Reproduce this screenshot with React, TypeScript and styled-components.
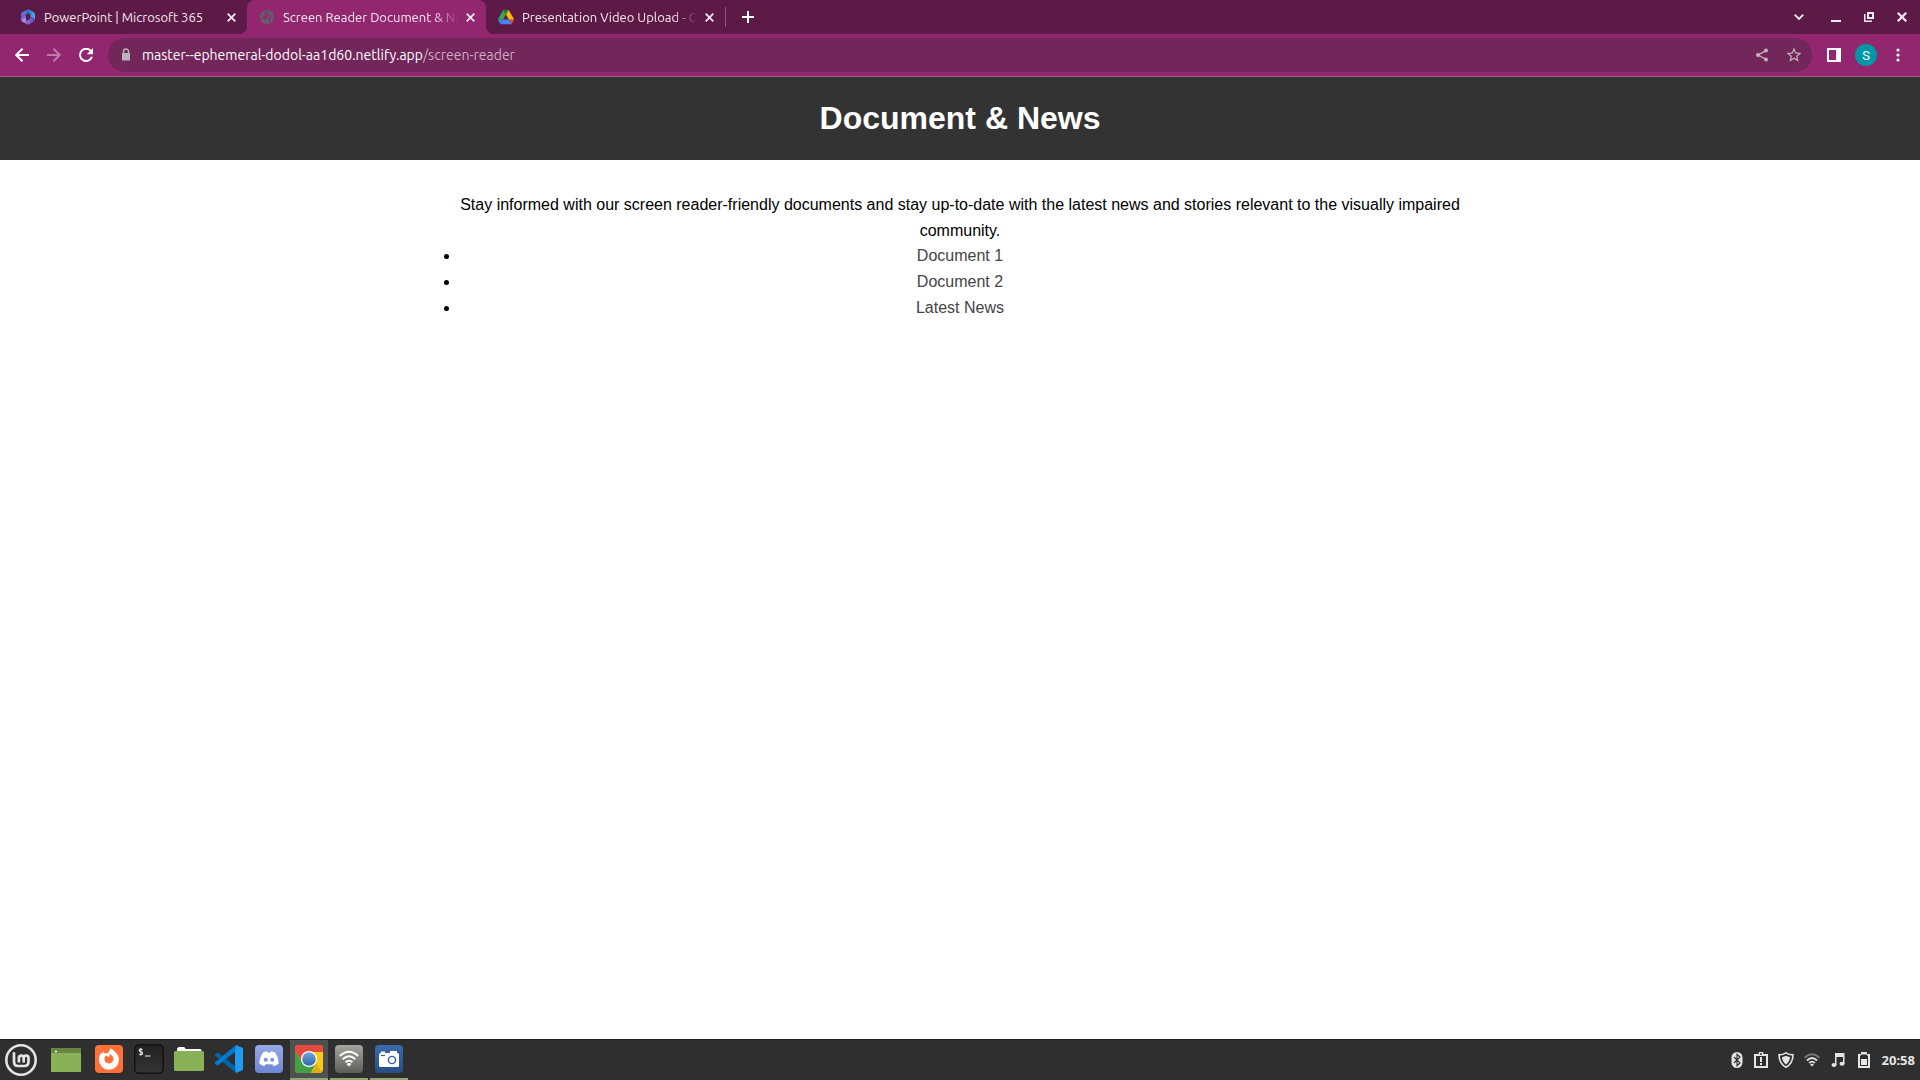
import React from "react";
import styled, { createGlobalStyle, css } from "styled-components";

const colors = {
  frame: "#5e1a46",
  toolbar: "#92276f",
  field: "#72265a",
  seam: "#ab5c93",
  page: "#333333",
  panel: "#2f2f2f",
  accent: "#8fa876",
};

const uiFont = `"Ubuntu", "Noto Sans", "Open Sans", sans-serif`;

const GlobalStyle = createGlobalStyle`
  * { box-sizing: border-box; }
  body { margin: 0; }
  button { padding: 0; border: 0; background: none; color: inherit; font: inherit; cursor: pointer; }
  svg { display: block; flex: none; }
`;

const Desktop = styled.div`
  display: flex;
  flex-direction: column;
  height: 100vh;
  background: #fff;
`;

/* ---------- browser window ---------- */

const TabStrip = styled.header`
  display: flex;
  align-items: stretch;
  height: 34px;
  flex: none;
  padding-left: 8px;
  background: ${colors.frame};
  color: #f3e8ef;
  font: 13px ${uiFont};
`;

const TabList = styled.div`
  display: flex;
`;

const activeTab = css`
  background: ${colors.toolbar};
  border-radius: 8px 8px 0 0;

  &::before,
  &::after {
    content: "";
    position: absolute;
    bottom: 0;
    width: 8px;
    height: 8px;
  }
  &::before {
    left: -8px;
    background: radial-gradient(circle at 0 0, transparent 8px, ${colors.toolbar} 8px);
  }
  &::after {
    right: -8px;
    background: radial-gradient(circle at 100% 0, transparent 8px, ${colors.toolbar} 8px);
  }
`;

const Tab = styled.div<{ $active?: boolean }>`
  position: relative;
  display: flex;
  align-items: center;
  gap: 4px;
  width: 239px;
  padding: 0 8px 0 12px;
  ${(p) => p.$active && activeTab}
`;

const TabButton = styled.button`
  display: flex;
  flex: 1;
  min-width: 0;
  align-items: center;
  gap: 8px;
  text-align: left;
`;

const TabTitle = styled.span<{ $fade?: boolean }>`
  flex: 1;
  overflow: hidden;
  white-space: nowrap;
  ${(p) => p.$fade && "mask-image: linear-gradient(to left, transparent, #000 24px);"}
`;

const IconButton = styled.button<{ $size: number; $dim?: boolean }>`
  display: grid;
  place-items: center;
  flex: none;
  width: ${(p) => p.$size}px;
  height: ${(p) => p.$size}px;
  opacity: ${(p) => (p.$dim ? 0.4 : 1)};
`;

const NewTab = styled.div`
  display: flex;
  align-items: center;
  align-self: center;
  height: 20px;
  padding-left: 8px;
  border-left: 1px solid #8d5a7a;
`;

const WindowControls = styled.div`
  display: flex;
  align-items: center;
  margin-left: auto;
  padding-right: 2px;
`;

const Toolbar = styled.div`
  display: flex;
  align-items: center;
  height: 43px;
  flex: none;
  padding: 0 6px;
  background: ${colors.toolbar};
  border-bottom: 1px solid ${colors.seam};
  color: #fff;
`;

const AddressBar = styled.form`
  display: flex;
  flex: 1;
  align-items: center;
  height: 34px;
  margin: 0 6px;
  padding: 0 2px 0 10px;
  border-radius: 17px;
  background: ${colors.field};
  color: #c3b3bd;
  font: 14px ${uiFont};
`;

const SiteHost = styled.label`
  margin-left: 8px;
  color: #fff;
`;

const PathInput = styled.input`
  flex: 1;
  min-width: 0;
  padding: 0;
  border: 0;
  outline: 0;
  background: none;
  color: #cdacc2;
  font: inherit;
`;

const Avatar = styled.span`
  display: grid;
  place-items: center;
  width: 22px;
  height: 22px;
  border-radius: 50%;
  background: #0097a7;
  color: #fff;
  font: 13px Roboto, sans-serif;
`;

/* ---------- web page ---------- */

const Page = styled.div`
  flex: 1;
  min-height: 0;
  overflow: auto;
  background: #fff;
  color: #000;
  font: 16px/1.6 "Liberation Sans", Arial, sans-serif;
  text-align: center;
`;

const Banner = styled.header`
  padding: 16px;
  background: ${colors.page};
  color: #fff;
`;

const Title = styled.h1`
  margin: 0;
  font-size: 32px;
`;

const Content = styled.main`
  max-width: 1000px;
  margin: 32px auto;
`;

const Intro = styled.p`
  margin: 0;
`;

const DocumentList = styled.ul`
  margin: 0;
  padding: 0;
`;

const DocumentLink = styled.a`
  color: #444;
  text-decoration: none;
`;

/* ---------- desktop panel ---------- */

const Panel = styled.footer`
  display: flex;
  align-items: stretch;
  height: 41px;
  flex: none;
  padding-right: 5px;
  border-top: 1px solid #202020;
  background: ${colors.panel};
  color: #e4e4e4;
`;

const Launchers = styled.nav`
  display: flex;
  gap: 2px;
`;

const MenuButton = styled.button`
  display: grid;
  place-items: center;
  width: 42px;
`;

const DesktopButton = styled(MenuButton)`
  width: 44px;
`;

const Launcher = styled.button<{ $open?: boolean; $focused?: boolean }>`
  display: grid;
  place-items: center;
  width: 38px;
  border-bottom: 2px solid ${(p) => (p.$open ? colors.accent : "transparent")};
  background: ${(p) => (p.$focused ? "#505050" : "none")};
`;

const Tray = styled.div`
  display: flex;
  align-items: center;
  gap: 2px;
  margin-left: auto;
`;

const Clock = styled.time`
  margin-left: 4px;
  font: bold 13px "Noto Sans", sans-serif;
`;

/* ---------- icons ---------- */

const CloseIcon = ({ size = 9, w = 1.8 }: { size?: number; w?: number }) => (
  <svg width={size} height={size} viewBox="0 0 9 9" stroke="currentColor" strokeWidth={w}>
    <path d="M.7.7l7.6 7.6M8.3.7L.7 8.3" />
  </svg>
);

const OfficeIcon = () => (
  <svg width="16" height="16" viewBox="0 0 16 16">
    <defs>
      <linearGradient id="offA" x1="0" y1="0" x2="0.3" y2="1">
        <stop offset="0" stopColor="#5bb4f0" />
        <stop offset=".55" stopColor="#5a5bd0" />
        <stop offset="1" stopColor="#b9a1ee" />
      </linearGradient>
      <linearGradient id="offB" x1="0" y1="0" x2="1" y2="1">
        <stop offset="0" stopColor="#2a5bb8" />
        <stop offset="1" stopColor="#43c8f5" />
      </linearGradient>
      <linearGradient id="offC" x1="0" y1="0" x2="1" y2="0">
        <stop offset="0" stopColor="#b57be0" />
        <stop offset="1" stopColor="#5646b8" />
      </linearGradient>
    </defs>
    <path d="M7.800.4L2 3.600Q1 4.200 1 5.400v5.200q0 1.200 1 1.800l2 1.100 2-1.300V5.600z" fill="url(#offA)" />
    <path d="M7.600.5q.9-.5 1.800 0L14 3.300q1 .6 1 1.700v5.300L10.500 7.800V5.300L8.200 4 6 5.400V2.700q0-1.400 1.600-2.200z" fill="url(#offB)" />
    <path d="M15 10.300q0 1.400-1 2l-4.600 2.900q-1.300.7-2.600 0L2.400 12.600q1.600.6 3.100-.2l5-3V7.600l3 .8z" fill="url(#offC)" />
  </svg>
);

const GlobeIcon = () => (
  <svg width="16" height="16" viewBox="0 0 16 16">
    <circle cx="8" cy="8" r="7" fill="#5f6368" />
    <path
      d="M8.500 2.500Q5.800 3 6.600 4.800L8.600 5 8 6.800 5.500 7.200 8.200 8.400 10.500 8.600 11 10.500 9.800 12.800M2.600 8.600L5.400 9 6.800 10.200 6.300 11.600M9.800 6.800L13.200 7.500"
      fill="none"
      stroke={colors.toolbar}
      strokeWidth="1.500"
    />
  </svg>
);

const DriveIcon = () => (
  <svg width="16" height="16" viewBox="0 0 87.3 78">
    <path d="m6.600 66.850 3.850 6.650c.8 1.400 1.950 2.500 3.300 3.300l13.750-23.800h-27.500c0 1.550.4 3.100 1.200 4.500z" fill="#4285f4" />
    <path d="m43.650 25-13.750-23.800c-1.350.8-2.500 1.900-3.300 3.300l-25.400 44a9.060 9.060 0 0 0 -1.200 4.500h27.500z" fill="#34a853" />
    <path d="m73.550 76.800c1.350-.8 2.500-1.900 3.300-3.300l1.600-2.750 7.650-13.250c.8-1.400 1.200-2.950 1.200-4.500h-27.502l5.852 11.500z" fill="#ea4335" />
    <path d="m43.650 25 13.750-23.800c-1.350-.8-2.900-1.200-4.500-1.200h-18.500c-1.600 0-3.150.45-4.500 1.200z" fill="#188038" />
    <path d="m59.800 53h-32.300l-13.750 23.800c1.350.8 2.900 1.200 4.500 1.200h50.800c1.600 0 3.150-.45 4.500-1.200z" fill="#4285f4" />
    <path d="m73.400 26.500-12.700-22c-.8-1.400-1.950-2.500-3.300-3.300l-13.750 23.800 16.150 28h27.450c0-1.550-.4-3.100-1.200-4.500z" fill="#fbbc04" />
  </svg>
);

const PlusIcon = () => (
  <svg width="12" height="12" viewBox="0 0 12 12" stroke="#fff" strokeWidth="2">
    <path d="M6 0v12M0 6h12" />
  </svg>
);
const ChevronIcon = () => (
  <svg width="10" height="6" viewBox="0 0 10 6" fill="none" stroke="currentColor" strokeWidth="1.800">
    <path d="M.7.7L5 5 9.300.7" />
  </svg>
);
const MinimizeIcon = () => (
  <svg width="10" height="10" viewBox="0 0 10 10" fill="currentColor">
    <path d="M0 8h10v2H0z" />
  </svg>
);
const RestoreIcon = () => (
  <svg width="10" height="10" viewBox="0 0 10 10" fill="currentColor">
    <path fillRule="evenodd" d="M3 0h7v7H3zM5 2v3h3V2z" />
    <path d="M0 2h1.500v6.500H8V10H0z" />
  </svg>
);

const ArrowIcon = ({ forward }: { forward?: boolean }) => (
  <svg width="14" height="14" viewBox="0 0 14 14" fill="none" stroke="currentColor" strokeWidth="2">
    <path d={forward ? "M0 7h12.500M6.500.7L12.800 7l-6.300 6.300" : "M14 7H1.500M7.500.7L1.200 7l6.300 6.300"} />
  </svg>
);
const ReloadIcon = () => (
  <svg width="14" height="14" viewBox="0 0 14 14">
    <path d="M12 3.200A6.100 6.100 0 1 0 12.900 8.800" fill="none" stroke="currentColor" strokeWidth="2" />
    <path d="M14 0v6.200H7.800z" fill="currentColor" />
  </svg>
);
const LockIcon = () => (
  <svg width="16" height="16" viewBox="0 0 16 16">
    <path d="M5.500 7V4.500a2.500 2.500 0 0 1 5 0V7" fill="none" stroke="#b9b5b9" strokeWidth="1.400" />
    <path d="M4 6h8v7.500H4z" fill="#b9b5b9" />
  </svg>
);
const ShareIcon = () => (
  <svg width="14" height="14" viewBox="0 0 14 14" fill="currentColor">
    <path d="M11 2.600L3 7l8 4.400" fill="none" stroke="currentColor" strokeWidth="1.200" />
    <circle cx="11" cy="2.600" r="2" />
    <circle cx="3" cy="7" r="2.100" />
    <circle cx="11" cy="11.400" r="2" />
  </svg>
);
const StarIcon = () => (
  <svg width="18" height="18" viewBox="0 0 24 24" fill="currentColor">
    <path d="M22 9.240l-7.190-.62L12 2 9.190 8.630 2 9.240l5.460 4.730L5.820 21 12 17.270 18.180 21l-1.630-7.030L22 9.240zM12 15.400l-3.760 2.270 1-4.280-3.320-2.880 4.380-.38L12 6.100l1.710 4.040 4.380.38-3.320 2.880 1 4.280L12 15.400z" />
  </svg>
);
const SidePanelIcon = () => (
  <svg width="14" height="14" viewBox="0 0 14 14" fill="currentColor">
    <path fillRule="evenodd" d="M0 0h14v14H0zM2 2v10h7V2z" />
  </svg>
);
const DotsIcon = () => (
  <svg width="4" height="14" viewBox="0 0 4 14" fill="currentColor">
    <circle cx="2" cy="2" r="1.600" />
    <circle cx="2" cy="7" r="1.600" />
    <circle cx="2" cy="12" r="1.600" />
  </svg>
);

const MintIcon = () => (
  <svg width="32" height="32" viewBox="0 0 32 32" fill="none" stroke="#e4e4e4">
    <circle cx="16" cy="16" r="14.700" strokeWidth="2.600" />
    <path d="M9 8.200v9.600q0 4.200 4.200 4.200h6q4.300 0 4.300-4.200V14a2.400 2.400 0 0 0-4.800 0v4.600M18.700 14a2.400 2.400 0 0 0-4.800 0v4.600" strokeWidth="2.700" />
  </svg>
);
const ShowDesktopIcon = () => (
  <svg width="30" height="24" viewBox="0 0 30 24">
    <path d="M0 0h30v24H0z" fill="#8bb158" />
    <path d="M0 0h30v5H0z" fill="#688542" />
    <circle cx="5" cy="3.500" r="1" fill="#fff" />
  </svg>
);
const FirefoxIcon = () => (
  <svg width="30" height="30" viewBox="0 0 30 30">
    <rect x="1" y="1.500" width="28" height="28" rx="4" fill="#1c1c1c" />
    <rect x="1" y="1" width="28" height="28" rx="4" fill="#ff7139" />
    <path
      fillRule="evenodd"
      d="M16.500 4.200Q20 6 21.500 8.500l1 .8q2.700 3 2.500 6.600A10 10 0 0 1 5 15.500Q5 11 7.500 8.500l.6 1.500 1.400-3 .9 2.200 2.600.3 1.600-1zM12.500 11.500l-1.600 1.300Q9.800 15 11 17.200q1.700 2.300 4.500 2.200 3.800-.8 4-4.400-.2-2.600-2.600-4.200l-1.600-.6.400 2.200-1.700.4z"
      fill="#fff"
    />
  </svg>
);
const TerminalIcon = () => (
  <svg width="30" height="30" viewBox="0 0 30 30">
    <defs>
      <linearGradient id="term" x1="0" y1="0" x2="0" y2="1">
        <stop offset="0" stopColor="#222" />
        <stop offset="1" stopColor="#353535" />
      </linearGradient>
    </defs>
    <rect x=".7" y=".7" width="28.600" height="28.600" rx="4.500" fill="url(#term)" stroke="#111" strokeWidth="1.400" />
    <path d="M8.500 5.600Q7.800 5 6.800 5 5.200 5 5.200 6.300T6.900 7.700 8.600 9.200 6.900 10.600 5 9.900M6.900 4v7.700M11 12h5.500" fill="none" stroke="#eee" strokeWidth="1.100" />
  </svg>
);
const FilesIcon = () => (
  <svg width="30" height="26" viewBox="0 0 30 26">
    <path d="M3 6V3.500Q3 1 5.500 1h4q1.500 0 2.200 2H26q1.500 0 1.500 1.500V6z" fill="#fff" />
    <rect y="5" width="30" height="20" rx="1.500" fill="#8bb158" />
  </svg>
);
const CodeIcon = () => (
  <svg width="30" height="30" viewBox="0 0 30 30">
    <path d="M1 10.500l2-1.700q.7-.4 1.300 0L22 23v6L1.200 11.800q-.7-.7-.2-1.300z" fill="#0065a9" />
    <path d="M1 19.500l2 1.700q.7.4 1.300 0L22 7V1L1.200 18.200q-.7.700-.2 1.300z" fill="#007acc" />
    <path d="M21 8l1-7 7 3v22l-7 3-1-7z" fill="#1f9cf0" />
  </svg>
);
const DiscordIcon = () => (
  <svg width="30" height="30" viewBox="0 0 30 30">
    <defs>
      <linearGradient id="disc" x1="0" y1="0" x2="0" y2="1">
        <stop offset="0" stopColor="#97a8e4" />
        <stop offset="1" stopColor="#6d86d6" />
      </linearGradient>
    </defs>
    <rect x="1" y="1" width="28" height="28" rx="4" fill="url(#disc)" />
    <path d="M9 8.500q2-1 3.700-1.200l.6 1.100h3.400l.6-1.100Q19 7.500 21 8.500q3.500 5 3.700 11-2.200 2-5.200 2.500l-1-1.800H11.500l-1 1.800q-3-.5-5.200-2.500.2-6 3.700-11z" fill="#fff" />
    <circle cx="11.800" cy="15.700" r="2" fill="#7d92dc" />
    <circle cx="18.200" cy="15.700" r="2" fill="#7d92dc" />
  </svg>
);
const ChromeIcon = () => (
  <svg width="30" height="30" viewBox="0 0 30 30">
    <defs>
      <clipPath id="chromeTile">
        <rect x="1" y="1" width="28" height="28" rx="4" />
      </clipPath>
      <linearGradient id="chromeBlue" x1="0" y1="0" x2="0" y2="1">
        <stop offset="0" stopColor="#73a9dc" />
        <stop offset="1" stopColor="#2b65a8" />
      </linearGradient>
    </defs>
    <g clipPath="url(#chromeTile)">
      <path d="M0 0h30v30H0z" fill="#f9cb12" />
      <path d="M0 5l8 13 13 2-4 10H0z" fill="#43a047" />
      <path d="M16 30l4-7 2-4 7 11z" fill="#dfae1a" />
      <path d="M0 0h30v8H15l-8 8L1 7z" fill="#e64a3f" />
    </g>
    <circle cx="15" cy="15" r="8" fill="#fff" />
    <circle cx="15" cy="15" r="6.800" fill="url(#chromeBlue)" />
  </svg>
);
const NetworkIcon = () => (
  <svg width="30" height="30" viewBox="0 0 30 30">
    <defs>
      <linearGradient id="net" x1="0" y1="0" x2="0" y2="1">
        <stop offset="0" stopColor="#a3a59e" />
        <stop offset="1" stopColor="#5c5e58" />
      </linearGradient>
    </defs>
    <rect x="1" y="1" width="28" height="28" rx="4" fill="url(#net)" />
    <path d="M5.800 12Q15 3.500 24.200 12M8.700 15.200q6.300-5.800 12.600 0M11.500 18.300q3.500-3.200 7 0" fill="none" stroke="#fff" strokeWidth="2" />
    <path d="M15 22.500l-2.500-2.600q2.500-1.700 5 0z" fill="#fff" />
  </svg>
);
const CameraIcon = () => (
  <svg width="30" height="30" viewBox="0 0 30 30">
    <defs>
      <linearGradient id="cam" x1="0" y1="0" x2="0" y2="1">
        <stop offset="0" stopColor="#3b6cab" />
        <stop offset="1" stopColor="#274c84" />
      </linearGradient>
    </defs>
    <rect x="1" y="1" width="28" height="28" rx="4" fill="url(#cam)" />
    <path d="M7 7.500h4V9H7zM16 7h7v2h-7z" fill="#fff" />
    <rect x="5" y="9" width="20" height="14" rx="1.500" fill="#fff" />
    <circle cx="18" cy="16" r="3.600" fill="none" stroke="#31609c" strokeWidth="1.400" />
    <path d="M7 11.500h4" stroke="#31609c" strokeWidth="1.200" />
  </svg>
);

const BluetoothIcon = () => (
  <svg width="12" height="16" viewBox="0 0 12 16">
    <rect x=".5" width="11" height="16" rx="5.500" fill="currentColor" />
    <path d="M3 5l6 6-3 2.700V2.300L9 5l-6 6" fill="none" stroke={colors.panel} strokeWidth="1.100" />
  </svg>
);
const ClipboardIcon = () => (
  <svg width="14" height="16" viewBox="0 0 14 16">
    <path fillRule="evenodd" d="M0 2h4.500a2.500 2.500 0 0 1 5 0H14v14H0zM2 4v10h10V4zM6 5h2v5H6zM6 11h2v2H6z" fill="currentColor" />
    <circle cx="7" cy="2" r="1" fill={colors.panel} />
  </svg>
);
const ShieldIcon = () => (
  <svg width="16" height="16" viewBox="0 0 16 16">
    <path d="M8 .8q3 2 7 2.100-.2 8.500-7 12.300Q1.200 11.400 1 2.900 5 2.800 8 .8z" fill="none" stroke="currentColor" strokeWidth="1.600" />
    <path d="M8 3.800q1.800 1 4.100 1.400-.5 4.500-4.100 7.200-3.600-2.700-4.100-7.200Q6.200 4.800 8 3.800z" fill="currentColor" />
  </svg>
);
const WifiIcon = () => (
  <svg width="16" height="14" viewBox="0 0 16 14" fill="none" strokeWidth="1.900">
    <path d="M.6 4.800Q8-2.200 15.400 4.800" stroke="#777" />
    <path d="M3 7.500q5-4.900 10 0M5.200 10q2.800-2.800 5.600 0" stroke="currentColor" />
    <path d="M8 13.500l-2-2q2-1.500 4 0z" fill="currentColor" />
  </svg>
);
const MusicIcon = () => (
  <svg width="14" height="14" viewBox="0 0 14 14" fill="currentColor">
    <path d="M4 0h9.500v11H12V4H5.500v8H4z" />
    <ellipse cx="3" cy="12" rx="2.500" ry="2" />
    <ellipse cx="11" cy="10.800" rx="2.500" ry="2" />
  </svg>
);
const BatteryIcon = () => (
  <svg width="12" height="16" viewBox="0 0 12 16">
    <path fillRule="evenodd" d="M3 0h6v2h3v14H0V2h3zM2 4v10h8V4L8.500 2.500h-5z" fill="currentColor" />
    <path d="M3 7h6v6H3z" fill="currentColor" />
  </svg>
);

/* ---------- data ---------- */

const tabs = [
  { title: "PowerPoint | Microsoft 365", icon: <OfficeIcon /> },
  { title: "Screen Reader Document & Ne", icon: <GlobeIcon />, active: true, fade: true },
  { title: "Presentation Video Upload - G", icon: <DriveIcon />, fade: true },
];

const documents = ["Document 1", "Document 2", "Latest News"];

const launchers = [
  { name: "Firefox", icon: <FirefoxIcon /> },
  { name: "Terminal", icon: <TerminalIcon /> },
  { name: "Files", icon: <FilesIcon /> },
  { name: "Code", icon: <CodeIcon /> },
  { name: "Discord", icon: <DiscordIcon /> },
  { name: "Chrome", icon: <ChromeIcon />, open: true, focused: true },
  { name: "Network", icon: <NetworkIcon />, open: true },
  { name: "Screenshot", icon: <CameraIcon />, open: true },
];

const tray = [
  { name: "Bluetooth", icon: <BluetoothIcon />, size: 22 },
  { name: "Reports", icon: <ClipboardIcon />, size: 22 },
  { name: "Updates", icon: <ShieldIcon />, size: 24 },
  { name: "Wi-Fi", icon: <WifiIcon />, size: 24 },
  { name: "Sound", icon: <MusicIcon />, size: 24 },
  { name: "Battery", icon: <BatteryIcon />, size: 24 },
];

export default function App() {
  return (
    <Desktop>
      <GlobalStyle />
      <TabStrip>
        <TabList role="tablist">
          {tabs.map((t) => (
            <Tab key={t.title} $active={t.active}>
              <TabButton role="tab" aria-selected={!!t.active}>
                {t.icon}
                <TabTitle $fade={t.fade}>{t.title}</TabTitle>
              </TabButton>
              <IconButton $size={16} aria-label="Close tab">
                <CloseIcon />
              </IconButton>
            </Tab>
          ))}
        </TabList>
        <NewTab>
          <IconButton $size={28} aria-label="New tab">
            <PlusIcon />
          </IconButton>
        </NewTab>
        <WindowControls>
          <IconButton $size={42} aria-label="Search tabs">
            <ChevronIcon />
          </IconButton>
          <IconButton $size={32} aria-label="Minimize">
            <MinimizeIcon />
          </IconButton>
          <IconButton $size={34} aria-label="Restore">
            <RestoreIcon />
          </IconButton>
          <IconButton $size={32} aria-label="Close window">
            <CloseIcon size={10} w={2} />
          </IconButton>
        </WindowControls>
      </TabStrip>

      <Toolbar>
        <IconButton $size={32} aria-label="Back">
          <ArrowIcon />
        </IconButton>
        <IconButton $size={32} $dim aria-label="Forward">
          <ArrowIcon forward />
        </IconButton>
        <IconButton $size={32} aria-label="Reload">
          <ReloadIcon />
        </IconButton>
        <AddressBar onSubmit={(e) => e.preventDefault()}>
          <LockIcon />
          <SiteHost htmlFor="path">master--ephemeral-dodol-aa1d60.netlify.app</SiteHost>
          <PathInput id="path" defaultValue="/screen-reader" />
          <IconButton type="button" $size={32} aria-label="Share">
            <ShareIcon />
          </IconButton>
          <IconButton type="button" $size={32} aria-label="Bookmark">
            <StarIcon />
          </IconButton>
        </AddressBar>
        <IconButton $size={32} aria-label="Side panel">
          <SidePanelIcon />
        </IconButton>
        <IconButton $size={32} aria-label="Profile">
          <Avatar>S</Avatar>
        </IconButton>
        <IconButton $size={32} aria-label="Menu">
          <DotsIcon />
        </IconButton>
      </Toolbar>

      <Page>
        <Banner>
          <Title>Document &amp; News</Title>
        </Banner>
        <Content>
          <Intro>
            Stay informed with our screen reader-friendly documents and stay up-to-date with the
            latest news and stories relevant to the visually impaired community.
          </Intro>
          <DocumentList>
            {documents.map((d) => (
              <li key={d}>
                <DocumentLink href="#">{d}</DocumentLink>
              </li>
            ))}
          </DocumentList>
        </Content>
      </Page>

      <Panel>
        <Launchers>
          <MenuButton aria-label="Menu">
            <MintIcon />
          </MenuButton>
          <DesktopButton aria-label="Show desktop">
            <ShowDesktopIcon />
          </DesktopButton>
          {launchers.map((l) => (
            <Launcher key={l.name} aria-label={l.name} $open={l.open} $focused={l.focused}>
              {l.icon}
            </Launcher>
          ))}
        </Launchers>
        <Tray>
          {tray.map((t) => (
            <IconButton key={t.name} $size={t.size} aria-label={t.name}>
              {t.icon}
            </IconButton>
          ))}
          <Clock>20:58</Clock>
        </Tray>
      </Panel>
    </Desktop>
  );
}
